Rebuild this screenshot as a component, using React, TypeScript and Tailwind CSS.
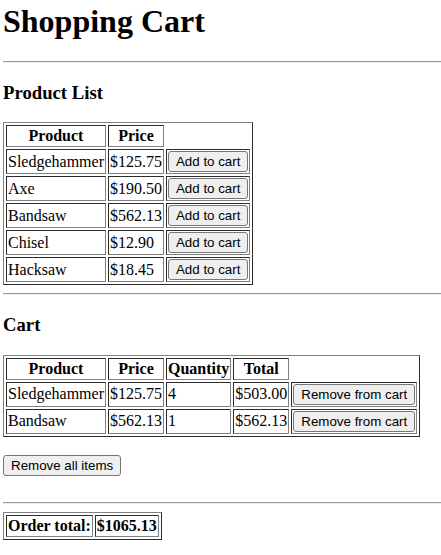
import React from 'react';

const products = [
  { name: 'Sledgehammer', price: 125.75 },
  { name: 'Axe', price: 190.5 },
  { name: 'Bandsaw', price: 562.13 },
  { name: 'Chisel', price: 12.9 },
  { name: 'Hacksaw', price: 18.45 },
];

const cart = [
  { name: 'Sledgehammer', price: 125.75, qty: 4 },
  { name: 'Bandsaw', price: 562.13, qty: 1 },
];

const tableCls = 'border-separate border-spacing-[2px] border border-[#808080] [border-style:outset]';
const cellCls = 'border border-[#808080] [border-style:inset] p-[1px] align-middle';
const btnCls =
  'font-["Liberation_Sans",Arial,sans-serif] text-[13.33px] leading-[15px] text-black bg-[#efefef] border border-[#767676] rounded-[3px] px-[7px] py-[2px]';

const App = () => {
  const total = cart.reduce((sum, item) => sum + item.price * item.qty, 0);

  return (
    <div className='font-["Liberation_Serif","Times_New_Roman",serif] text-[16px] leading-[normal] text-black bg-white pl-[3px] pt-[3px] min-h-[555px]'>
      <h1 className="text-[32px] font-bold leading-[normal] mb-[21px]">Shopping Cart</h1>
      <hr className="border-t border-b border-t-[#9a9a9a] border-b-[#eeeeee]" />

      <h3 className="text-[18.72px] font-bold leading-[normal] my-[18.72px]">Product List</h3>
      <table className={tableCls}>
        <tbody>
          <tr>
            <th className={cellCls}>Product</th>
            <th className={cellCls}>Price</th>
          </tr>
          {products.map((p) => (
            <tr key={p.name}>
              <td className={cellCls}>{p.name}</td>
              <td className={cellCls}>${p.price.toFixed(2)}</td>
              <td className={cellCls}>
                <button className={btnCls}>Add to cart</button>
              </td>
            </tr>
          ))}
        </tbody>
      </table>

      <hr className="mt-[8px] border-t border-b border-t-[#9a9a9a] border-b-[#eeeeee]" />

      <h3 className="text-[18.72px] font-bold leading-[normal] my-[18.72px]">Cart</h3>
      <table className={tableCls}>
        <tbody>
          <tr>
            <th className={cellCls}>Product</th>
            <th className={cellCls}>Price</th>
            <th className={cellCls}>Quantity</th>
            <th className={cellCls}>Total</th>
          </tr>
          {cart.map((c) => (
            <tr key={c.name}>
              <td className={cellCls}>{c.name}</td>
              <td className={cellCls}>${c.price.toFixed(2)}</td>
              <td className={cellCls}>{c.qty}</td>
              <td className={cellCls}>${(c.price * c.qty).toFixed(2)}</td>
              <td className={cellCls}>
                <button className={btnCls}>Remove from cart</button>
              </td>
            </tr>
          ))}
        </tbody>
      </table>

      <div className="mt-[18px] mb-[26px]">
        <button className={btnCls}>Remove all items</button>
      </div>

      <hr className="mb-[8px] border-t border-b border-t-[#9a9a9a] border-b-[#eeeeee]" />

      <table className={tableCls}>
        <tbody>
          <tr>
            <th className={cellCls}>Order total:</th>
            <th className={cellCls}>${total.toFixed(2)}</th>
          </tr>
        </tbody>
      </table>
    </div>
  );
};

export default App;
